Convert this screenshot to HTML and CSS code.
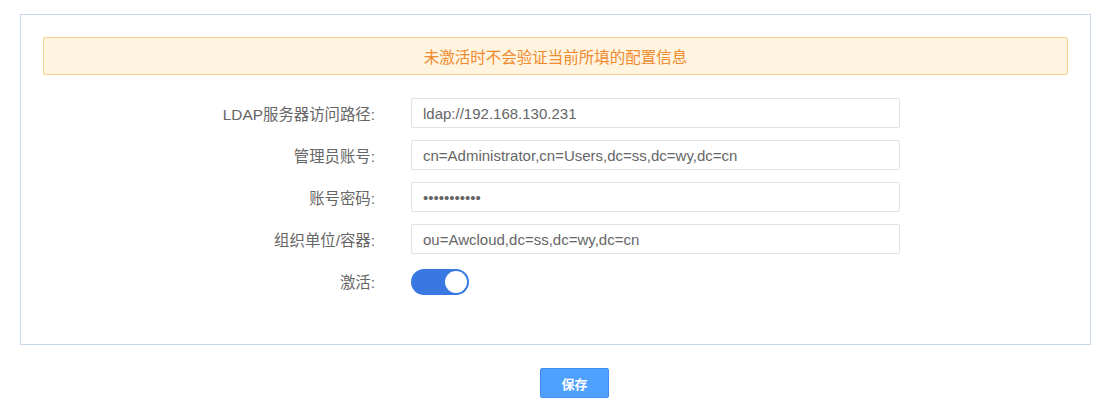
FILE: index.html
```html
<!DOCTYPE html>
<html lang="zh-CN">
<head>
<meta charset="utf-8">
<title>LDAP</title>
<link rel="stylesheet" href="styles.css">
</head>
<body>
<div class="page">
  <div class="card">
    <div class="alert">未激活时不会验证当前所填的配置信息</div>
    <div class="form">
      <div class="label">LDAP服务器访问路径:</div>
      <div class="field"><input class="input" type="text" value="ldap://192.168.130.231"></div>
      <div class="label">管理员账号:</div>
      <div class="field"><input class="input" type="text" value="cn=Administrator,cn=Users,dc=ss,dc=wy,dc=cn"></div>
      <div class="label">账号密码:</div>
      <div class="field"><input class="input" type="password" value="xxxxxxxxxxx"></div>
      <div class="label">组织单位/容器:</div>
      <div class="field"><input class="input" type="text" value="ou=Awcloud,dc=ss,dc=wy,dc=cn"></div>
      <div class="label">激活:</div>
      <div class="field"><span class="switch"><span class="knob"></span></span></div>
    </div>
  </div>
  <div class="actions">
    <button class="btn" type="button">保存</button>
  </div>
</div>
</body>
</html>
```
FILE: styles.css
```css
* { box-sizing: border-box; }
html, body { margin: 0; padding: 0; background: #fff; }
body {
  font-family: "Liberation Sans", "Noto Sans CJK SC", sans-serif;
  color: #666;
}
.page {
  padding: 14px 23px 0 20px;
}
.card {
  border: 1px solid #c9d6ee;
  padding: 22px 22px 48px 22px;
}
.alert {
  height: 38px;
  border: 1px solid #f6d08e;
  background: #fff4e0;
  border-radius: 2px;
  color: #f08a2e;
  font-size: 15.5px;
  display: flex;
  align-items: center;
  justify-content: center;
}
.form {
  margin-top: 23px;
  display: grid;
  grid-template-columns: 332px 489px;
  column-gap: 36px;
  row-gap: 12px;
}
.label {
  height: 30px;
  display: flex;
  align-items: center;
  justify-content: flex-end;
  font-size: 15.4px;
  color: #666;
}
.field {
  height: 30px;
  display: flex;
  align-items: center;
}
.input {
  width: 100%;
  height: 30px;
  border: 1px solid #e3e3e3;
  border-radius: 2px;
  padding: 0 11px;
  font-family: "Liberation Sans", "Noto Sans CJK SC", sans-serif;
  font-size: 15px;
  color: #666;
  background: #fff;
  outline: none;
}
.switch {
  display: inline-flex;
  align-items: center;
  justify-content: flex-end;
  width: 58px;
  height: 26px;
  border-radius: 13px;
  background: #3878e0;
  padding: 2px;
  margin-top: 2px;
}
.knob {
  width: 22px;
  height: 22px;
  border-radius: 50%;
  background: #fff;
}
.actions {
  padding: 23px 0 0 520px;
}
.btn {
  width: 69px;
  height: 30px;
  border: 1px solid #3f8df3;
  border-radius: 2px;
  background: #4fa1ff;
  color: #fff;
  font-family: "Liberation Sans", "Noto Sans CJK SC", sans-serif;
  font-size: 13px;
  font-weight: bold;
  padding: 0;
}
```
